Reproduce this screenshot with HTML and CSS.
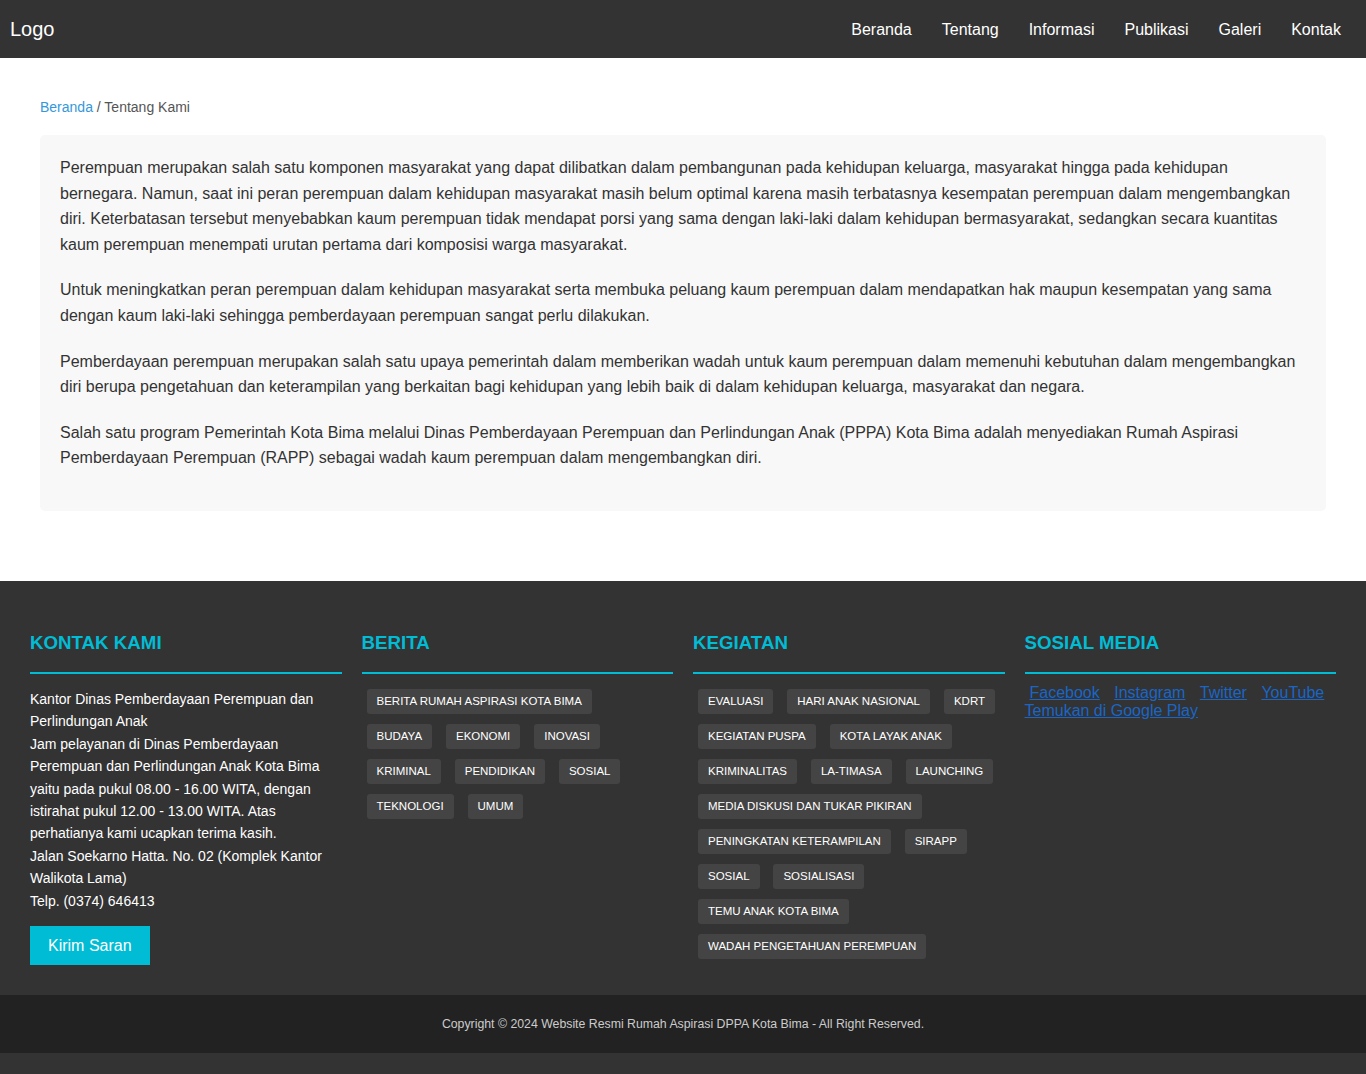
FILE: index.html
```html
<!DOCTYPE html>
<html lang="id">
<head>
<meta charset="utf-8">
<title>Tentang Kami</title>
<link rel="stylesheet" href="styles.css">
</head>
<body>
<header class="topbar">
  <div class="logo">Logo</div>
  <nav class="nav">
    <a href="#">Beranda</a>
    <a href="#">Tentang</a>
    <a href="#">Informasi</a>
    <a href="#">Publikasi</a>
    <a href="#">Galeri</a>
    <a href="#">Kontak</a>
  </nav>
</header>

<main class="main">
  <div class="breadcrumb"><a href="#">Beranda</a> / Tentang Kami</div>
  <section class="content">
    <p>Perempuan merupakan salah satu komponen masyarakat yang dapat dilibatkan dalam pembangunan pada kehidupan keluarga, masyarakat hingga pada kehidupan bernegara. Namun, saat ini peran perempuan dalam kehidupan masyarakat masih belum optimal karena masih terbatasnya kesempatan perempuan dalam mengembangkan diri. Keterbatasan tersebut menyebabkan kaum perempuan tidak mendapat porsi yang sama dengan laki-laki dalam kehidupan bermasyarakat, sedangkan secara kuantitas kaum perempuan menempati urutan pertama dari komposisi warga masyarakat.</p>
    <p>Untuk meningkatkan peran perempuan dalam kehidupan masyarakat serta membuka peluang kaum perempuan dalam mendapatkan hak maupun kesempatan yang sama dengan kaum laki-laki sehingga pemberdayaan perempuan sangat perlu dilakukan.</p>
    <p>Pemberdayaan perempuan merupakan salah satu upaya pemerintah dalam memberikan wadah untuk kaum perempuan dalam memenuhi kebutuhan dalam mengembangkan diri berupa pengetahuan dan keterampilan yang berkaitan bagi kehidupan yang lebih baik di dalam kehidupan keluarga, masyarakat dan negara.</p>
    <p>Salah satu program Pemerintah Kota Bima melalui Dinas Pemberdayaan Perempuan dan Perlindungan Anak (PPPA) Kota Bima adalah menyediakan Rumah Aspirasi Pemberdayaan Perempuan (RAPP) sebagai wadah kaum perempuan dalam mengembangkan diri.</p>
  </section>
</main>

<footer class="footer">
  <div class="footer-grid">
    <div class="col">
      <h3>KONTAK KAMI</h3>
      <p class="contact">Kantor Dinas Pemberdayaan Perempuan dan Perlindungan Anak<br>Jam pelayanan di Dinas Pemberdayaan Perempuan dan Perlindungan Anak Kota Bima yaitu pada pukul 08.00 - 16.00 WITA, dengan istirahat pukul 12.00 - 13.00 WITA. Atas perhatianya kami ucapkan terima kasih.<br>Jalan Soekarno Hatta. No. 02 (Komplek Kantor Walikota Lama)<br>Telp. (0374) 646413</p>
      <a href="#" class="btn">Kirim Saran</a>
    </div>
    <div class="col">
      <h3>BERITA</h3>
      <div class="tags">
        <a href="#" class="tag">BERITA RUMAH ASPIRASI KOTA BIMA</a>
        <a href="#" class="tag">BUDAYA</a>
        <a href="#" class="tag">EKONOMI</a>
        <a href="#" class="tag">INOVASI</a>
        <a href="#" class="tag">KRIMINAL</a>
        <a href="#" class="tag">PENDIDIKAN</a>
        <a href="#" class="tag">SOSIAL</a>
        <a href="#" class="tag">TEKNOLOGI</a>
        <a href="#" class="tag">UMUM</a>
      </div>
    </div>
    <div class="col">
      <h3>KEGIATAN</h3>
      <div class="tags">
        <a href="#" class="tag">EVALUASI</a>
        <a href="#" class="tag">HARI ANAK NASIONAL</a>
        <a href="#" class="tag">KDRT</a>
        <a href="#" class="tag">KEGIATAN PUSPA</a>
        <a href="#" class="tag">KOTA LAYAK ANAK</a>
        <a href="#" class="tag">KRIMINALITAS</a>
        <a href="#" class="tag">LA-TIMASA</a>
        <a href="#" class="tag">LAUNCHING</a>
        <a href="#" class="tag">MEDIA DISKUSI DAN TUKAR PIKIRAN</a>
        <a href="#" class="tag">PENINGKATAN KETERAMPILAN</a>
        <a href="#" class="tag">SIRAPP</a>
        <a href="#" class="tag">SOSIAL</a>
        <a href="#" class="tag">SOSIALISASI</a>
        <a href="#" class="tag">TEMU ANAK KOTA BIMA</a>
        <a href="#" class="tag">WADAH PENGETAHUAN PEREMPUAN</a>
      </div>
    </div>
    <div class="col">
      <h3>SOSIAL MEDIA</h3>
      <div class="social">
        <a href="#">Facebook</a> <a href="#">Instagram</a> <a href="#">Twitter</a> <a href="#">YouTube</a>
        <a href="#" class="play">Temukan di Google Play</a>
      </div>
    </div>
  </div>
</footer>
<div class="copyright">Copyright © 2024 Website Resmi Rumah Aspirasi DPPA Kota Bima - All Right Reserved.</div>
</body>
</html>
```

FILE: styles.css
```css
html, body {
  margin: 0;
  padding: 0;
}
body {
  background: #333;
  font-family: "Liberation Sans", Arial, sans-serif;
  color: #333;
}
a { text-decoration: none; }

.topbar {
  height: 58px;
  box-sizing: border-box;
  padding: 1px 10px 0;
  background: #333;
  display: flex;
  align-items: center;
  justify-content: space-between;
}
.logo {
  color: #fff;
  font-size: 20px;
}
.nav {
  display: flex;
}
.nav a {
  color: #fff;
  font-size: 16px;
  padding: 0 15px;
}

.main {
  background: #fff;
  padding: 40px 40px 70px;
}
.breadcrumb {
  font-size: 14px;
  line-height: 18px;
  color: #555;
  margin-bottom: 19px;
}
.breadcrumb a { color: #3498db; }

.content {
  background: #f8f8f8;
  border-radius: 5px;
  padding: 20px 20px;
}
.content p {
  margin: 0 0 20px;
  font-size: 16px;
  line-height: 1.6;
  color: #333;
}

.footer {
  background: #333;
  padding: 50px 30px 30px;
  color: #fff;
}
.footer-grid {
  display: grid;
  grid-template-columns: repeat(4, 1fr);
  column-gap: 20px;
}
.col h3 {
  margin: 0;
  color: #00bcd4;
  font-size: 18.72px;
  font-weight: bold;
  line-height: 23px;
  padding-bottom: 18px;
  border-bottom: 2px solid #00bcd4;
}
.contact {
  margin: 14px 0 0;
  font-size: 14px;
  line-height: 22.4px;
  color: #fff;
}
.btn {
  display: inline-block;
  margin-top: 14px;
  background: #00bcd4;
  color: #fff;
  font-size: 16px;
  line-height: 19px;
  padding: 10px 18px;
}
.tags {
  margin-top: 10px;
  font-size: 14px;
  line-height: 22.4px;
}
.tag {
  display: inline-block;
  vertical-align: top;
  margin: 5px;
  padding: 6px 10px;
  background: #444;
  color: #fff;
  font-size: 11.5px;
  line-height: 13px;
  border-radius: 3px;
}
.social {
  margin-top: 10px;
  font-size: 16px;
  line-height: normal;
}
.social a {
  color: #1a66c6;
  text-decoration: underline;
  margin: 0 5px;
}
.social a.play {
  display: block;
  margin: 0;
  width: fit-content;
}

.copyright {
  background: #222;
  color: #ccc;
  font-size: 12.3px;
  line-height: 18px;
  padding: 20px;
  text-align: center;
}
```
